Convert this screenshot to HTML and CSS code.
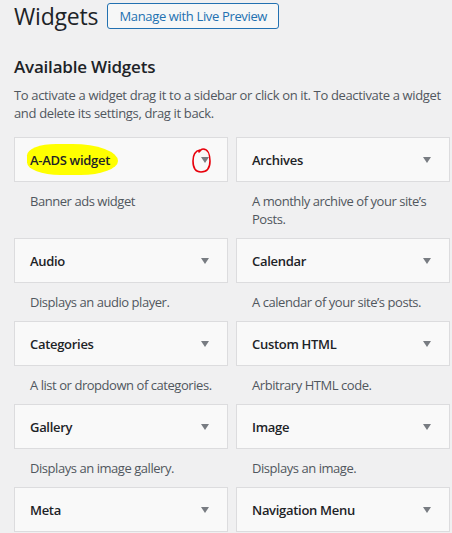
FILE: index.html
```html
<!DOCTYPE html>
<html>
<head>
<meta charset="utf-8">
<link rel="stylesheet" href="styles.css">
</head>
<body>
<div class="wrap">
  <div class="head">
    <h1 class="title">Widgets</h1>
    <a class="btn">Manage with Live Preview</a>
  </div>
  <h2 class="avail">Available Widgets</h2>
  <p class="intro">To activate a widget drag it to a sidebar or click on it. To deactivate a widget and delete its settings, drag it back.</p>
  <div class="grid">
    <div class="widget">
      <div class="wtop">
        <span class="wname marker">A-ADS widget</span>
        <span class="arrow"></span>
        <svg class="circle" width="22" height="28" viewBox="0 0 22 28"><path d="M9 3 C4 4 2 9 2 14 C2 20 4 25 10 25 C16 25 19 21 19 14 C19 8 17 2 12 2 C10 2 9 4 8 5" fill="none" stroke="#e8000b" stroke-width="1.6" stroke-linecap="round"/></svg>
      </div>
      <div class="wdesc">Banner ads widget</div>
    </div>
    <div class="widget">
      <div class="wtop"><span class="wname">Archives</span><span class="arrow"></span></div>
      <div class="wdesc">A monthly archive of your site’s Posts.</div>
    </div>
    <div class="widget">
      <div class="wtop"><span class="wname">Audio</span><span class="arrow"></span></div>
      <div class="wdesc">Displays an audio player.</div>
    </div>
    <div class="widget">
      <div class="wtop"><span class="wname">Calendar</span><span class="arrow"></span></div>
      <div class="wdesc">A calendar of your site’s posts.</div>
    </div>
    <div class="widget">
      <div class="wtop"><span class="wname">Categories</span><span class="arrow"></span></div>
      <div class="wdesc">A list or dropdown of categories.</div>
    </div>
    <div class="widget">
      <div class="wtop"><span class="wname">Custom HTML</span><span class="arrow"></span></div>
      <div class="wdesc">Arbitrary HTML code.</div>
    </div>
    <div class="widget">
      <div class="wtop"><span class="wname">Gallery</span><span class="arrow"></span></div>
      <div class="wdesc">Displays an image gallery.</div>
    </div>
    <div class="widget">
      <div class="wtop"><span class="wname">Image</span><span class="arrow"></span></div>
      <div class="wdesc">Displays an image.</div>
    </div>
    <div class="widget">
      <div class="wtop"><span class="wname">Meta</span><span class="arrow"></span></div>
    </div>
    <div class="widget">
      <div class="wtop"><span class="wname">Navigation Menu</span><span class="arrow"></span></div>
    </div>
  </div>
</div>
</body>
</html>
```
FILE: styles.css
```css
html, body {
  margin: 0;
  padding: 0;
  background: #f0f0f1;
  overflow: hidden;
}
body {
  font-family: "Open Sans", "Noto Sans", sans-serif;
  color: #1d2327;
  font-size: 13px;
}
.wrap {
  padding: 3px 0 0 14px;
}
.head {
  display: flex;
  align-items: center;
  gap: 9px;
  height: 26px;
}
.title {
  margin: 0;
  font-size: 23px;
  font-weight: 400;
  line-height: 26px;
  letter-spacing: -0.2px;
}
.btn {
  display: inline-block;
  box-sizing: border-box;
  height: 26px;
  width: 172px;
  border: 1px solid #2271b1;
  border-radius: 3px;
  background: #f6f7f7;
  color: #2271b1;
  font-size: 13px;
  line-height: 24px;
  text-align: center;
  letter-spacing: -0.35px;
}
.avail {
  margin: 28px 0 0;
  font-size: 17px;
  font-weight: 600;
  line-height: 20px;
  letter-spacing: -0.2px;
}
.intro {
  margin: 9px 0 0;
  color: #50575e;
  line-height: 18px;
  letter-spacing: -0.35px;
  width: 440px;
}
.grid {
  margin-top: 15px;
  display: grid;
  grid-template-columns: 214px 214px;
  column-gap: 8px;
  align-items: start;
}
.widget {
  margin-bottom: 10px;
}
.wtop {
  position: relative;
  box-sizing: border-box;
  height: 45px;
  border: 1px solid #dcdcde;
  background: #f9f9f9;
  display: flex;
  align-items: center;
  justify-content: space-between;
  padding: 0 18px 0 15px;
}
.wname {
  font-weight: 600;
  font-size: 13px;
  letter-spacing: -0.3px;
  position: relative;
  z-index: 1;
}
.marker {
  background: #ffff00;
  margin-left: -3px;
  padding: 7px 8px 6px 3px;
  border-radius: 35% 55% 45% 40% / 40% 60% 50% 45%;
}
.arrow {
  width: 0;
  height: 0;
  border-left: 4px solid transparent;
  border-right: 4px solid transparent;
  border-top: 6px solid #787c82;
}
.circle {
  position: absolute;
  right: 14px;
  top: 9px;
}
.wdesc {
  padding: 10px 10px 0 16px;
  color: #50575e;
  line-height: 18px;
  letter-spacing: -0.45px;
}
```
